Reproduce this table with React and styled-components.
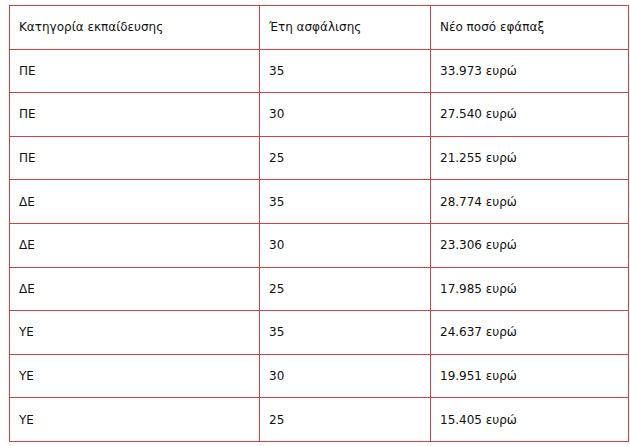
import React from "react";
import styled, { createGlobalStyle } from "styled-components";

const GlobalStyle = createGlobalStyle`
  html, body {
    margin: 0;
    padding: 0;
    background: #ffffff;
  }
  body {
    padding: 5px 0 0 9px;
    font-family: "DejaVu Sans", Verdana, sans-serif;
  }
`;

const Table = styled.table`
  border-collapse: separate;
  border-spacing: 0;
  width: 620px;
  table-layout: fixed;
  font-size: 12px;
  color: #111111;
  border-top: 1px solid #cc4444;
  border-left: 1px solid #cc4444;
`;

const Row = styled.tr`
  height: 43.6px;
`;

const Cell = styled.td`
  border-right: 1px solid #cc4444;
  border-bottom: 1px solid #cc4444;
  padding: 0 9px;
  vertical-align: middle;
  text-align: left;
  white-space: nowrap;
`;

const HeadCell = styled(Cell).attrs({ as: "th" })`
  font-weight: normal;
`;

const rows = [
  ["ΠΕ", "35", "33.973 ευρώ"],
  ["ΠΕ", "30", "27.540 ευρώ"],
  ["ΠΕ", "25", "21.255 ευρώ"],
  ["ΔΕ", "35", "28.774 ευρώ"],
  ["ΔΕ", "30", "23.306 ευρώ"],
  ["ΔΕ", "25", "17.985 ευρώ"],
  ["ΥΕ", "35", "24.637 ευρώ"],
  ["ΥΕ", "30", "19.951 ευρώ"],
  ["ΥΕ", "25", "15.405 ευρώ"],
];

const App = () => {
  return (
    <>
      <GlobalStyle />
      <Table>
        <colgroup>
          <col style={{ width: 250 }} />
          <col style={{ width: 171 }} />
          <col style={{ width: 198 }} />
        </colgroup>
        <thead>
          <Row>
            <HeadCell>Κατηγορία εκπαίδευσης</HeadCell>
            <HeadCell>Έτη ασφάλισης</HeadCell>
            <HeadCell>Νέο ποσό εφάπαξ</HeadCell>
          </Row>
        </thead>
        <tbody>
          {rows.map((r, i) => (
            <Row key={i}>
              <Cell>{r[0]}</Cell>
              <Cell>{r[1]}</Cell>
              <Cell>{r[2]}</Cell>
            </Row>
          ))}
        </tbody>
      </Table>
    </>
  );
};

export default App;
